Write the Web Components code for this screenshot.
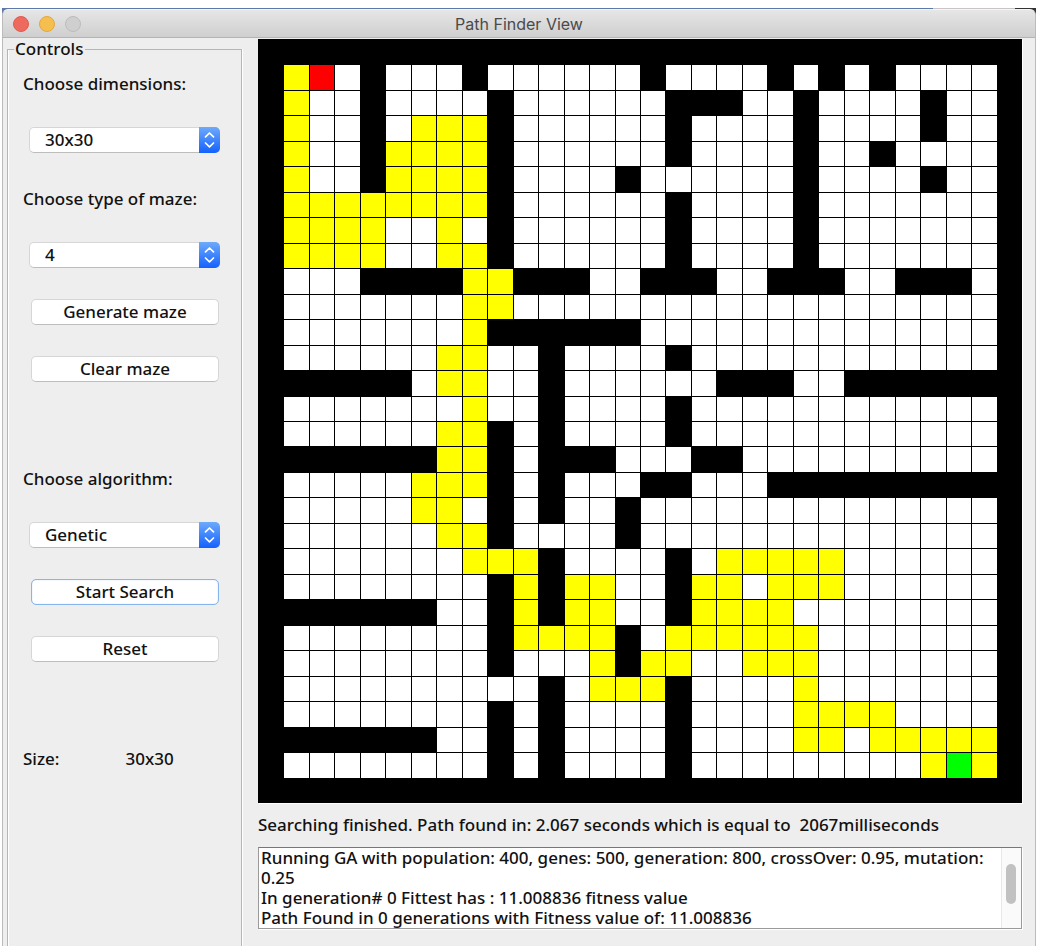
<!DOCTYPE html>
<html lang="en">
<head>
<meta charset="utf-8">
<meta name="viewport" content="width=device-width, initial-scale=1">
<title>Path Finder View</title>
<style>
  html { background: #fff; }
  body {
    box-sizing: border-box;
    min-height: 100vh;
    margin: 0;
    padding: 8px 8px 2px 2px;
    display: flex;
    color: #111;
    font: 500 17px/20px "Noto Sans", "Open Sans", sans-serif;
  }
</style>
</head>
<body>
<app-window heading="Path Finder View">
  <control-panel slot="side" heading="Controls">
    <choice-field label="Choose dimensions:" options="30x30"></choice-field>
    <choice-field label="Choose type of maze:" options="4"></choice-field>
    <push-button>Generate maze</push-button>
    <push-button>Clear maze</push-button>
    <choice-field class="group" label="Choose algorithm:" options="Genetic"></choice-field>
    <push-button focused>Start Search</push-button>
    <push-button>Reset</push-button>
    <size-readout class="group" label="Size:">30x30</size-readout>
  </control-panel>
  <maze-grid></maze-grid>
  <status-line>Searching finished. Path found in: 2.067 seconds which is equal to  2067milliseconds</status-line>
  <search-log></search-log>
</app-window>

<script>
class Base extends HTMLElement {
  render(html) {
    this.attachShadow({ mode: "open" }).innerHTML = html;
  }
}

customElements.define("app-window", class extends Base {
  connectedCallback() {
    this.render(`
      <style>
        :host {
          flex: 1; min-width: 0; display: flex;
          padding-top: 1px;
          background: linear-gradient(90deg, #5d79aa 90%, #c9c5c6 90%, #c9c5c6 98%, #333 98%) top / 100% 8px no-repeat;
        }
        .window {
          flex: 1; min-width: 0; display: flex; flex-direction: column;
          border: 1px solid #bbb; border-top-color: #f6f6f6; border-bottom: 0;
          border-radius: 6px 6px 0 0;
          background: #eee; overflow: hidden;
        }
        header {
          display: grid; grid-template-columns: 1fr auto 1fr; align-items: center;
          box-sizing: border-box; height: 28px; padding: 0 10px;
          background: linear-gradient(#e6e6e6, #cfcfcf);
          border-bottom: 1px solid #b4b4b4;
        }
        .lights { display: flex; gap: 10px; }
        .lights i { box-sizing: border-box; width: 16px; height: 16px; border-radius: 50%; border: 1px solid #e2594f; background: #ee6a5f; }
        .lights i:nth-child(2) { border-color: #e3a83c; background: #f5bf4f; }
        .lights i:nth-child(3) { border-color: #bcbcbc; background: #cfcfcf; }
        h1 { margin: 0; color: #4a4a4a; font: 400 16px/20px Inter, Roboto, sans-serif; }
        main { flex: 1; display: grid; grid-template-columns: 239px minmax(0, 1fr); }
        .work { display: flex; flex-direction: column; padding: 1px 13px 16px 16px; }
      </style>
      <section class="window">
        <header><div class="lights"><i></i><i></i><i></i></div><h1></h1></header>
        <main><slot name="side"></slot><div class="work"><slot></slot></div></main>
      </section>`);
    this.shadowRoot.querySelector("h1").textContent = this.getAttribute("heading");
  }
});

customElements.define("control-panel", class extends Base {
  connectedCallback() {
    this.render(`
      <style>
        :host { display: flex; padding-left: 4px; }
        fieldset {
          flex: 1; min-width: 0; margin: 0; padding: 12px 15px 0;
          border: 1px solid #b5b5b5; border-bottom: 0;
          box-shadow: 1px 0 #fff, inset 1px 0 #fff;
        }
        legend { margin-left: -9px; padding: 0 2px 0 1px; line-height: 22px; }
        ::slotted(.group) { margin-top: 85px; }
        ::slotted(:first-child) { margin-top: 0; }
      </style>
      <fieldset><legend></legend><slot></slot></fieldset>`);
    this.shadowRoot.querySelector("legend").textContent = this.getAttribute("heading");
  }
});

customElements.define("choice-field", class extends Base {
  connectedCallback() {
    this.render(`
      <style>
        :host { display: block; margin-top: 34px; }
        label { display: block; line-height: 24px; }
        .box { position: relative; margin: 31px 6px 0 6px; }
        select {
          appearance: none; display: block; box-sizing: border-box;
          width: 100%; height: 26px; margin: 0; padding: 0 32px 0 15px;
          border: 1px solid #d6d6d6; border-bottom-color: #bdbdbd; border-radius: 5px;
          background: #fff; color: inherit; font: inherit;
        }
        svg { position: absolute; top: 0; right: 0; width: 21px; height: 26px; pointer-events: none; }
      </style>
      <label for="choice"></label>
      <div class="box">
        <select id="choice"></select>
        <svg viewBox="0 0 21 26" aria-hidden="true">
          <defs><linearGradient id="blue" x2="0" y2="1"><stop stop-color="#6eaafa"/><stop offset="1" stop-color="#1461fe"/></linearGradient></defs>
          <path d="M0 0h16a5 5 0 0 1 5 5v16a5 5 0 0 1-5 5H0z" fill="url(#blue)"/>
          <path d="M6.5 9.8 10.5 6l4 3.8M6.5 16l4 3.8 4-3.8" fill="none" stroke="#fff" stroke-width="1.7" stroke-linecap="round" stroke-linejoin="round"/>
        </svg>
      </div>`);
    this.shadowRoot.querySelector("label").textContent = this.getAttribute("label");
    const select = this.shadowRoot.querySelector("select");
    for (const text of this.getAttribute("options").split(",")) select.add(new Option(text));
  }
});

customElements.define("push-button", class extends Base {
  connectedCallback() {
    this.render(`
      <style>
        :host { display: block; margin: 31px 7px 0 8px; }
        button {
          display: block; box-sizing: border-box; width: 100%; height: 26px; margin: 0; padding: 0;
          border: 1px solid #d6d6d6; border-bottom-color: #bdbdbd; border-radius: 5px;
          background: #fff; color: inherit; font: inherit;
        }
        :host([focused]) button { border-color: #86b5ee; box-shadow: inset 0 0 1px #86b5ee; }
      </style>
      <button type="button"><slot></slot></button>`);
  }
});

customElements.define("size-readout", class extends Base {
  connectedCallback() {
    this.render(`
      <style>
        :host { display: grid; grid-template-columns: 1fr 1fr; line-height: 24px; }
        output { padding-left: 1px; }
      </style>
      <label for="size"></label><output id="size"><slot></slot></output>`);
    this.shadowRoot.querySelector("label").textContent = this.getAttribute("label");
  }
});

// Column spans of each row, numbered from the outer wall (0) to the outer wall (29).
const WALLS = [
  "0-29", "4 8 15 20 22 24", "4 9 16-18 21 26", "4 9 16 21 26", "4 9 16 21 24", "4 9 14 21 26",
  "9 16 21", "9 16 21", "9 16 21", "4-7 10-12 15-17 20-22 25-27", "", "9-14", "11 16",
  "1-5 11 18-20 23-28", "11 16", "9 11 16", "1-6 9 11-13 17-18", "9 11 15-16 20-28", "9 11 14",
  "9 14", "11 16", "9 11 16", "1-6 9 11 16", "9 14", "9 14", "11 16", "9 11 16", "1-6 9 11 16",
  "9 11 16", "0-29"
];
const PATH = [
  "", "1", "1", "1 6-8", "1 5-8", "1 5-8", "1-8", "1-4 7", "1-4 7-8", "8-9", "8-9", "8", "7-8",
  "7-8", "8", "7-8", "7-8", "6-8", "6-7", "7-8", "8-10 18-22", "10 12-13 17-18 20-22",
  "10 12-13 17-20", "10-13 16-21", "13 15-16 19-21", "13-15 21", "21-24", "21-22 24-28", "26 28", ""
];

customElements.define("maze-grid", class extends Base {
  connectedCallback() {
    this.render(`
      <style>
        :host {
          display: grid; aspect-ratio: 1;
          grid-template: repeat(30, 1fr) / repeat(30, 1fr);
          background: #000; box-shadow: 1px 1px #fff;
        }
        i { border: solid #000; border-width: 1px 0 0 1px; background: #fff; }
        .wall { background: #000; }
        .path { background: #ff0; }
        .start { background: #f00; }
        .goal { background: #0f0; }
      </style>`);
    const cells = Array.from({ length: 30 }, () => Array(30).fill("open"));
    const fill = (rows, kind) => rows.forEach((spans, row) => {
      for (const span of spans.split(" ").filter(Boolean)) {
        const [from, to = from] = span.split("-").map(Number);
        cells[row].fill(kind, from, to + 1);
      }
    });
    fill(WALLS, "wall");
    fill(PATH, "path");
    cells.forEach(row => { row[0] = row[29] = "wall"; });
    cells[1][2] = "start";
    cells[28][27] = "goal";
    for (const kind of cells.flat()) {
      const cell = document.createElement("i");
      cell.className = kind;
      this.shadowRoot.append(cell);
    }
  }
});

customElements.define("status-line", class extends Base {
  connectedCallback() {
    this.render(`<style>:host { display: block; margin: 12px 0; white-space: pre-wrap; }</style><slot></slot>`);
  }
});

customElements.define("search-log", class extends Base {
  connectedCallback() {
    this.render(`
      <style>
        :host { display: flex; border: 1px solid #9a9a9a; border-top-color: #777; background: #fff; box-shadow: 1px 1px #fff; }
        textarea {
          flex: 1; min-width: 0; box-sizing: border-box; height: 80px; margin: 0; padding: 0 0 0 2px;
          border: 0; outline: 0; resize: none; background: none; color: inherit; font: inherit;
          overflow: hidden;
        }
        .track { box-sizing: border-box; width: 20px; padding: 16px 4px 0; border-left: 1px solid #e8e8e8; background: #fafafa; }
        .thumb { width: 10px; height: 40px; border-radius: 5px; background: #c1c1c1; }
      </style>
      <textarea readonly aria-label="Search log">Running GA with population: 400, genes: 500, generation: 800, crossOver: 0.95, mutation: 0.25
In generation# 0 Fittest has : 11.008836 fitness value
Path Found in 0 generations with Fitness value of: 11.008836</textarea>
      <div class="track"><div class="thumb"></div></div>`);
  }
});
</script>
</body>
</html>
